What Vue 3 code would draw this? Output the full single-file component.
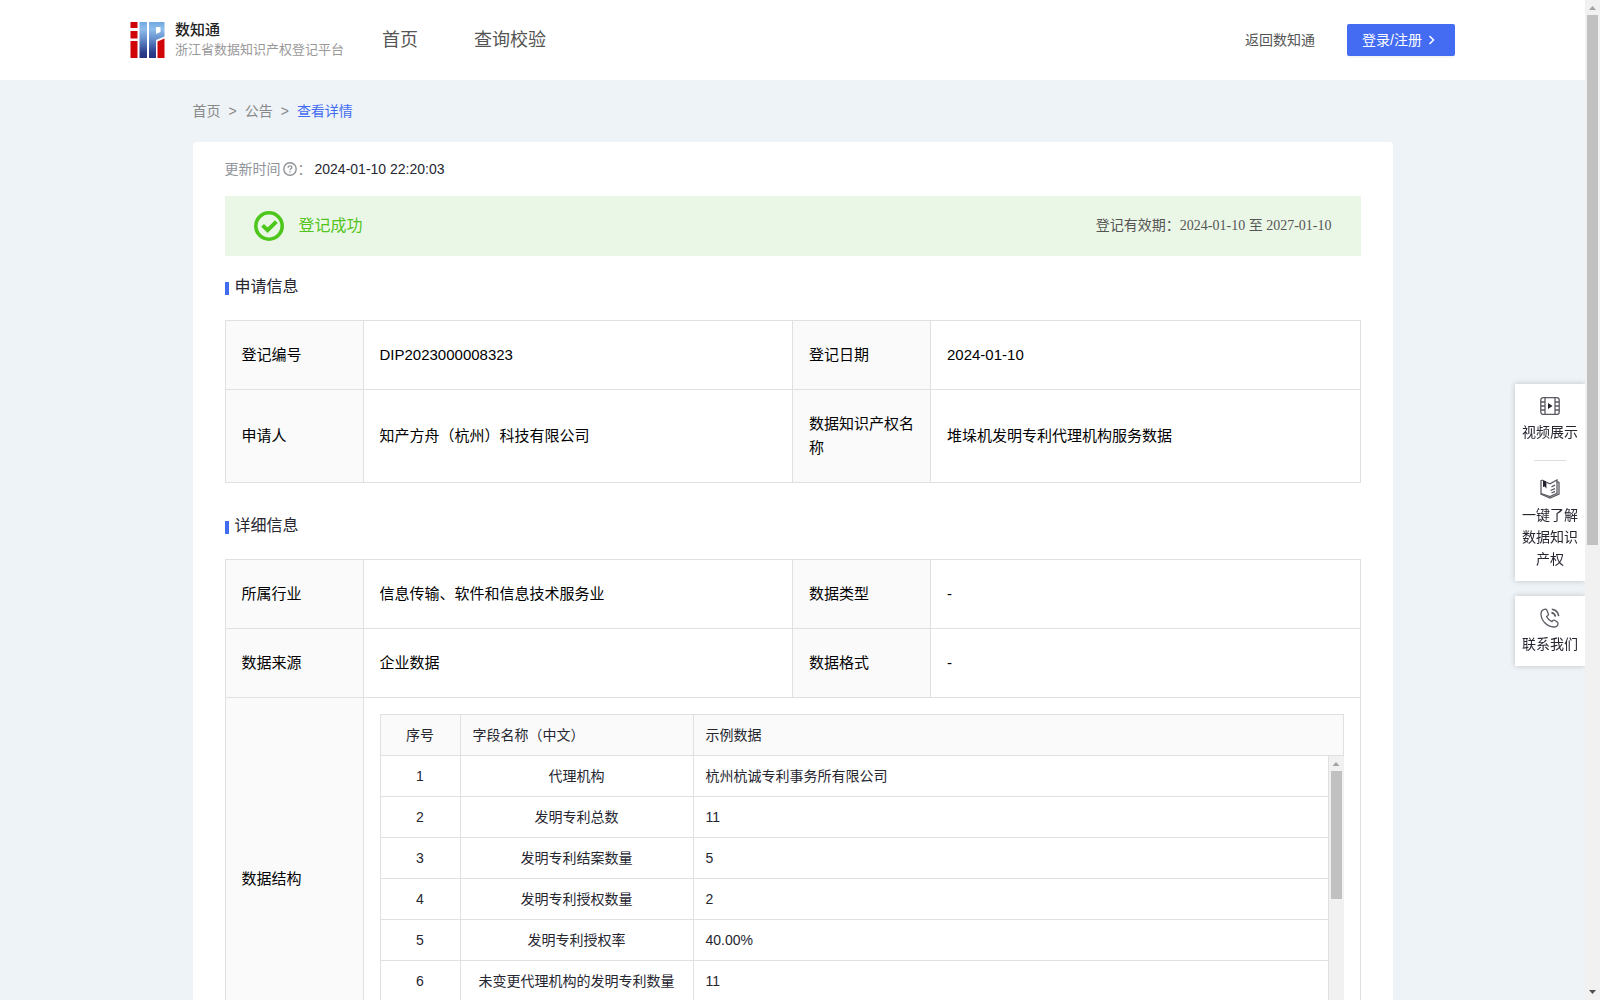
<script setup>
import { ref } from 'vue'

const navItems = ['首页', '查询校验']

// 面包屑
const crumbs = [
  { label: '首页', active: false },
  { label: '公告', active: false },
  { label: '查看详情', active: true }
]

// 申请信息
const applyRows = ref([
  [
    { label: '登记编号', value: 'DIP2023000008323' },
    { label: '登记日期', value: '2024-01-10' }
  ],
  [
    { label: '申请人', value: '知产方舟（杭州）科技有限公司' },
    { label: '数据知识产权名称', value: '堆垛机发明专利代理机构服务数据' }
  ]
])

// 详细信息
const detailRows = ref([
  [
    { label: '所属行业', value: '信息传输、软件和信息技术服务业' },
    { label: '数据类型', value: '-' }
  ],
  [
    { label: '数据来源', value: '企业数据' },
    { label: '数据格式', value: '-' }
  ]
])

// 数据结构
const fields = ref([
  { name: '代理机构', sample: '杭州杭诚专利事务所有限公司' },
  { name: '发明专利总数', sample: '11' },
  { name: '发明专利结案数量', sample: '5' },
  { name: '发明专利授权数量', sample: '2' },
  { name: '发明专利授权率', sample: '40.00%' },
  { name: '未变更代理机构的发明专利数量', sample: '11' }
])
</script>

<template>
  <div class="layout">
    <div class="page">
      <header class="header">
        <a class="brand" href="#">
          <svg class="brand-logo" viewBox="0 0 34 36" aria-hidden="true">
            <defs>
              <linearGradient id="logoBlue" gradientUnits="userSpaceOnUse" x1="0" y1="0" x2="0" y2="36">
                <stop offset="0" stop-color="#6fa8e0" />
                <stop offset="0.2" stop-color="#8fbdec" />
                <stop offset="0.5" stop-color="#6189c8" />
                <stop offset="0.85" stop-color="#2b3d8c" />
                <stop offset="1" stop-color="#27327f" />
              </linearGradient>
            </defs>
            <path d="M0 0h7v6H0zM0 9h7v7.500H0zM0 19h7v17H0z" fill="#d00508" />
            <path d="M9 0h7.500v36H9z" fill="url(#logoBlue)" />
            <path d="M18.500 0H34v14.500l-8.500 3.500v18h-7zM25.500 5v7l4.500-2V5z" fill="url(#logoBlue)" fill-rule="evenodd" />
            <path d="M27 19.500l7-3V36h-7z" fill="#d00508" />
          </svg>
          <span class="brand-text">
            <strong>数知通</strong>
            <small>浙江省数据知识产权登记平台</small>
          </span>
        </a>
        <nav class="nav">
          <a v-for="item in navItems" :key="item" href="#">{{ item }}</a>
        </nav>
        <div class="header-right">
          <a class="back-link" href="#">返回数知通</a>
          <button type="button" class="login-btn">
            <span>登录/注册</span>
            <svg width="12" height="12" viewBox="0 0 12 12" aria-hidden="true">
              <path d="M3.500 2l4 4-4 4" fill="none" stroke="currentColor" stroke-width="1.500" />
            </svg>
          </button>
        </div>
      </header>

      <main class="container">
        <nav class="breadcrumb">
          <template v-for="(crumb, i) in crumbs" :key="crumb.label">
            <span v-if="i > 0">&gt;</span>
            <a href="#" :class="{ active: crumb.active }">{{ crumb.label }}</a>
          </template>
        </nav>

        <div class="card">
          <div class="update-time">
            <span class="update-label">更新时间</span>
            <svg width="14" height="14" viewBox="0 0 14 14" aria-hidden="true">
              <circle cx="7" cy="7" r="6.2" fill="none" stroke="#909399" stroke-width="1.4" />
              <path d="M5.1 5.7c0-1.2.8-1.9 1.9-1.9s1.9.7 1.9 1.7c0 1.3-1.9 1.4-1.9 2.8M7 9.3v1.3" fill="none" stroke="#909399" stroke-width="1.3" />
            </svg>
            <span class="update-label">：</span>
            <span>2024-01-10 22:20:03</span>
          </div>

          <div class="status-bar">
            <svg width="30" height="30" viewBox="0 0 30 30" aria-hidden="true">
              <circle cx="15" cy="15" r="13.2" fill="none" stroke="#4ec71d" stroke-width="3.6" />
              <path d="M8.600 14.400l5 4.800 8.800-8.600" fill="none" stroke="#4ec71d" stroke-width="4" />
            </svg>
            <span class="status-text">登记成功</span>
            <span class="validity">登记有效期：2024-01-10 至 2027-01-10</span>
          </div>

          <h2 class="section-title">申请信息</h2>
          <table class="info-table">
            <tbody>
              <tr v-for="(row, i) in applyRows" :key="i">
                <template v-for="cell in row" :key="cell.label">
                  <th scope="row">{{ cell.label }}</th>
                  <td>{{ cell.value }}</td>
                </template>
              </tr>
            </tbody>
          </table>

          <h2 class="section-title">详细信息</h2>
          <table class="info-table">
            <tbody>
              <tr v-for="(row, i) in detailRows" :key="i">
                <template v-for="cell in row" :key="cell.label">
                  <th scope="row">{{ cell.label }}</th>
                  <td>{{ cell.value }}</td>
                </template>
              </tr>
              <tr>
                <th scope="row">数据结构</th>
                <td colspan="3" class="nested">
                  <table class="field-table field-head">
                    <thead>
                      <tr>
                        <th scope="col" class="col-index">序号</th>
                        <th scope="col" class="col-name">字段名称（中文）</th>
                        <th scope="col">示例数据</th>
                      </tr>
                    </thead>
                  </table>
                  <div class="field-body">
                    <table class="field-table">
                      <tbody>
                        <tr v-for="(field, i) in fields" :key="field.name">
                          <td class="col-index">{{ i + 1 }}</td>
                          <td class="col-name">{{ field.name }}</td>
                          <td>{{ field.sample }}</td>
                        </tr>
                      </tbody>
                    </table>
                    <div class="scrollbar" aria-hidden="true">
                      <i class="arrow up"></i>
                      <i class="thumb thumb-inner"></i>
                    </div>
                  </div>
                </td>
              </tr>
            </tbody>
          </table>
        </div>
      </main>
    </div>

    <!-- 页面滚动条 -->
    <div class="scrollbar" aria-hidden="true">
      <i class="arrow up"></i>
      <i class="thumb thumb-page"></i>
      <i class="arrow down"></i>
    </div>

    <!-- 右侧悬浮工具 -->
    <aside class="float-tools">
      <div class="tool-group">
        <a class="tool" href="#">
          <svg width="20" height="20" viewBox="0 0 20 20" fill="none" stroke="#5a5a62" stroke-width="1.3" aria-hidden="true">
            <rect x="0.8" y="1.6" width="18.4" height="16.8" rx="2.500" />
            <path d="M5 1.6v16.8M15 1.6v16.8M.8 6H5M.8 10H5M.8 14H5M15 6h4.2M15 10h4.2M15 14h4.2" />
            <path d="M8 7l4.500 3L8 13z" fill="#22222c" stroke="none" />
          </svg>
          <span>视频展示</span>
        </a>
        <hr class="tool-line" />
        <a class="tool" href="#">
          <svg width="20" height="20" viewBox="0 0 20 20" fill="none" stroke="#5a5a62" stroke-width="1.3" aria-hidden="true">
            <path d="M3 1L1 1.800V15l9 4 9-4V3.500l-2-.8" />
            <path d="M1 14.500l9 3 7-3.200V1L10 4.800 6.500 3.400" />
            <path d="M11.500 7.800l3.500-1.600M10.500 11.500l4.500-1.800M11.500 14l3.500-1.600" />
            <path d="M3 1l3.400 1.500v7L4.700 7.400 3 8z" fill="#22222c" stroke="none" />
          </svg>
          <span>一键了解数据知识产权</span>
        </a>
      </div>
      <div class="tool-group">
        <a class="tool" href="#">
          <svg width="20" height="20" viewBox="0 0 20 20" fill="none" stroke="#5a5a62" stroke-width="1.3" aria-hidden="true">
            <path d="M5.2 1.2C2.8 1.6.9 3.6 1 6.2 1.4 13 7 18.7 13.8 19c2.4 0 4-1.400 4.200-3.300.1-.7-.2-1.300-.8-1.700l-2.500-1.700c-.7-.4-1.500-.2-2 .4l-.8 1c-2.200-.9-4.300-3-5.300-5.200l1.300-.9c.6-.5.7-1.200.4-1.900L6.800 2.100c-.3-.6-.9-1-1.600-.9z" />
            <path d="M11.400 4.600c2.200.3 3.600 1.700 4 4M11.800 1.300c4 .5 6.400 3 6.900 6.900" stroke-width="1.600" />
          </svg>
          <span>联系我们</span>
        </a>
      </div>
    </aside>
  </div>
</template>

<style>
body {
  margin: 0;
}
</style>

<style scoped>
.layout {
  display: flex;
  height: 100vh;
  overflow: hidden;
  background: #eef3f7;
  color: #262631;
  font-family: "Liberation Sans", "Noto Sans CJK SC", sans-serif;
  font-size: 14px;
  line-height: 22px;
}

.layout * {
  box-sizing: border-box;
}

a {
  color: inherit;
  text-decoration: none;
}

.page {
  flex: 1;
  min-width: 0;
  overflow-y: auto;
  scrollbar-width: none;
}

/* 顶部导航 */
.header {
  display: flex;
  align-items: center;
  height: 80px;
  padding: 0 130px;
  background: #fff;
}

.brand {
  display: flex;
  align-items: center;
  gap: 10px;
}

.brand-logo {
  width: 35px;
  height: 36px;
}

.brand-text {
  display: flex;
  flex-direction: column;
}

.brand-text strong {
  color: #222;
  font-size: 15px;
  font-weight: 500;
  line-height: 20px;
}

.brand-text small {
  color: #999;
  font-size: 13px;
  line-height: 20px;
}

.nav {
  display: flex;
  gap: 56px;
  margin-left: 38px;
  color: #555;
  font-size: 18px;
}

.header-right {
  display: flex;
  align-items: center;
  gap: 32px;
  margin-left: auto;
}

.back-link {
  color: #555;
}

.login-btn {
  display: flex;
  align-items: center;
  gap: 4px;
  width: 108px;
  height: 32px;
  padding: 0 15px;
  border: none;
  border-radius: 2px;
  background: #436cf3;
  box-shadow: 0 2px 0 rgba(0, 0, 0, 0.04);
  color: #fff;
  font: inherit;
  white-space: nowrap;
  cursor: pointer;
}

.container {
  max-width: 1200px;
  margin: 0 auto;
}

.breadcrumb {
  display: flex;
  gap: 8px;
  padding: 20px 0;
  color: #888;
}

.breadcrumb .active {
  color: #436cf3;
}

.card {
  padding: 16px 32px 32px;
  border-radius: 4px;
  background: #fff;
}

.update-time {
  display: flex;
  align-items: center;
  margin-bottom: 16px;
}

.update-time svg {
  margin: 0 1px 0 2px;
}

.update-time span:last-child {
  margin-left: 3px;
}

.update-label {
  color: #909399;
}

/* 登记状态 */
.status-bar {
  display: flex;
  align-items: center;
  height: 60px;
  margin-bottom: 20px;
  padding: 0 29px;
  background: #ebf7e6;
}

.status-text {
  margin-left: 15px;
  color: #52c41a;
  font-size: 16px;
}

.validity {
  margin-left: auto;
  color: #555;
  font-family: "Liberation Serif", "Noto Sans CJK SC", serif;
}

.section-title {
  display: flex;
  align-items: center;
  gap: 6px;
  margin: 0 0 22px;
  font-size: 16px;
  font-weight: 400;
}

.section-title::before {
  width: 4px;
  height: 13px;
  margin-top: 2px;
  background: #436cf3;
  content: "";
}

/* 信息表格 */
.info-table {
  width: 100%;
  margin-bottom: 32px;
  border-top: 1px solid #e0e0e0;
  border-left: 1px solid #e0e0e0;
  border-spacing: 0;
  table-layout: fixed;
  color: #000;
  font-size: 15px;
  line-height: 24px;
}

.info-table th,
.info-table td {
  padding: 22px 16px;
  border-right: 1px solid #e0e0e0;
  border-bottom: 1px solid #e0e0e0;
  font-weight: 400;
  text-align: left;
}

.info-table th {
  width: 138px;
  background: #fafafa;
}

.info-table .nested {
  padding: 16px;
}

.field-table {
  width: 100%;
  border-left: 1px solid #e0e0e0;
  border-spacing: 0;
  table-layout: fixed;
  color: #262631;
  font-size: 14px;
  line-height: 20px;
}

.field-head {
  border-top: 1px solid #e0e0e0;
}

.field-table th,
.field-table td {
  width: auto;
  padding: 10px 12px;
}

.field-table .col-index {
  width: 80px;
  text-align: center;
}

.field-table .col-name {
  width: 233px;
}

.field-table td.col-name {
  text-align: center;
}

.field-body {
  display: flex;
  align-items: flex-start;
  height: 287px;
}

.field-body .field-table {
  flex: 1;
}

/* 滚动条 */
.scrollbar {
  display: flex;
  flex: none;
  flex-direction: column;
  align-items: center;
  align-self: stretch;
  width: 15px;
  background: #f1f1f1;
}

.arrow {
  width: 7px;
  height: 4px;
  margin: 6px 0 5px;
  background: #a3a3a3;
  clip-path: polygon(50% 0, 100% 100%, 0 100%);
}

.arrow.down {
  margin-top: auto;
  margin-bottom: 6px;
  background: #505050;
  clip-path: polygon(0 0, 100% 0, 50% 100%);
}

.thumb {
  width: 11px;
  background: #c1c1c1;
}

.thumb-page {
  height: 53%;
}

.thumb-inner {
  height: 128px;
}

/* 悬浮工具 */
.float-tools {
  position: fixed;
  top: 384px;
  right: 15px;
  display: flex;
  flex-direction: column;
  gap: 15px;
  width: 70px;
  clip-path: inset(-10px 0 -10px -10px);
}

.tool-group {
  padding: 12px 7px 11px;
  background: #fff;
  box-shadow: 0 0 6px rgba(0, 0, 0, 0.2);
}

.tool {
  display: flex;
  flex-direction: column;
  align-items: center;
  gap: 5px;
  text-align: center;
}

.tool-line {
  width: 32px;
  height: 1px;
  margin: 17px auto 18px;
  border: none;
  background: #ddd;
}
</style>
